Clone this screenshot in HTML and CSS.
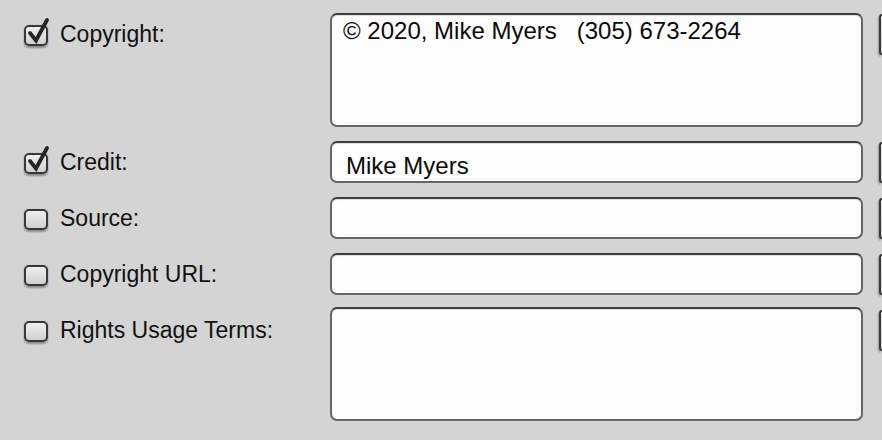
FILE: index.html
```html
<!DOCTYPE html>
<html>
<head>
<meta charset="utf-8">
<link rel="stylesheet" href="styles.css">
</head>
<body>
<div class="form">
  <div class="label"><span class="cb"><svg class="check" viewBox="0 0 26 30" width="26" height="30"><path d="M6 15 L12 22.5 L23 2" /></svg></span><span class="txt">Copyright:</span></div>
  <div class="field area">© 2020, Mike Myers&nbsp;&nbsp;&nbsp;(305) 673-2264</div>
  <div class="btn"></div>

  <div class="label"><span class="cb"><svg class="check" viewBox="0 0 26 30" width="26" height="30"><path d="M6 15 L12 22.5 L23 2" /></svg></span><span class="txt">Credit:</span></div>
  <div class="field line">Mike Myers</div>
  <div class="btn"></div>

  <div class="label"><span class="cb"></span><span class="txt">Source:</span></div>
  <div class="field line"></div>
  <div class="btn"></div>

  <div class="label"><span class="cb"></span><span class="txt">Copyright URL:</span></div>
  <div class="field line"></div>
  <div class="btn"></div>

  <div class="label"><span class="cb"></span><span class="txt">Rights Usage Terms:</span></div>
  <div class="field area last"></div>
  <div class="btn"></div>
</div>
</body>
</html>
```
FILE: styles.css
```css
html, body {
  margin: 0;
  padding: 0;
  background: #d4d4d4;
  width: 882px;
  height: 440px;
  overflow: hidden;
  font-family: "Liberation Sans", Arial, sans-serif;
  color: #111;
}
.form {
  display: grid;
  grid-template-columns: 290px 533px 1fr;
  column-gap: 16px;
  row-gap: 14px;
  padding: 13px 0 0 24px;
  align-items: start;
}
.label {
  display: flex;
  align-items: flex-start;
  gap: 12px;
  padding-top: 12px;
}
.txt {
  font-size: 23px;
  line-height: 20px;
  margin-top: -1px;
  white-space: nowrap;
}
.cb {
  position: relative;
  flex: none;
  width: 24px;
  height: 21px;
  box-sizing: border-box;
  border: 2px solid #383838;
  border-radius: 5px;
  background: linear-gradient(#efefef, #d0d0d0);
  box-shadow: 0 1.5px 2px rgba(0,0,0,0.35);
}
.check {
  position: absolute;
  left: -2px;
  top: -9px;
  overflow: visible;
}
.check path {
  fill: none;
  stroke: #262626;
  stroke-width: 3.8;
  stroke-linecap: round;
  stroke-linejoin: miter;
}
.field {
  box-sizing: border-box;
  background: #fdfdfd;
  border: 2px solid #666;
  border-top: 2.5px solid #404040;
  border-radius: 7px;
  font-size: 24px;
  line-height: 28px;
  color: #0a0a0a;
  white-space: pre;
  box-shadow: inset 0 1px 1px rgba(0,0,0,0.12);
}
.area {
  height: 114px;
  padding: 2px 10px 0 11px;
}
.line {
  height: 42px;
  padding: 9px 12px 0 14px;
}
.last {
  margin-top: -2px;
}
.btn {
  box-sizing: border-box;
  height: 41px;
  margin-top: 1px;
  border: 2px solid #3a3a3a;
  border-right: none;
  border-radius: 7px 0 0 7px;
  background: linear-gradient(#e6e6e6, #d0d0d0);
  box-shadow: -1px 1.5px 2px rgba(0,0,0,0.3);
}
```
